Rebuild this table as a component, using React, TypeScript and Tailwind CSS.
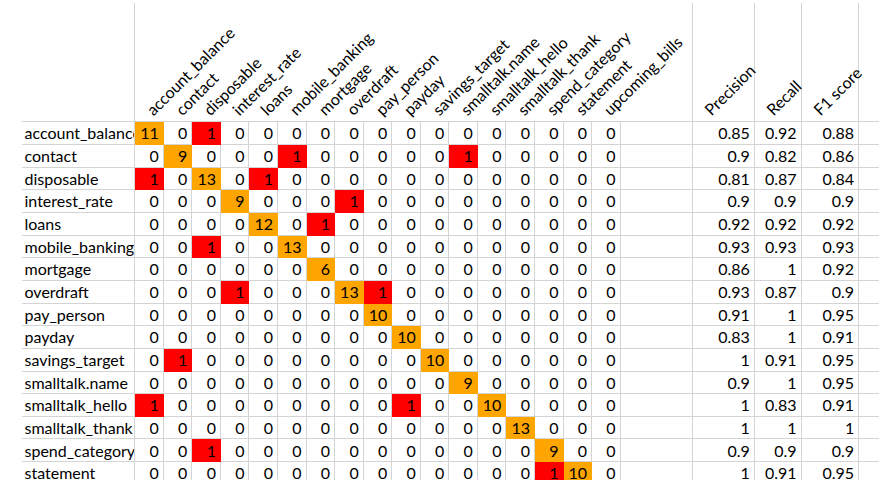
const GRID =
  "grid grid-cols-[22px_113.3px_repeat(17,28.55px)_72.6px_61.7px_46.7px_57.6px_1fr]";

const intents = [
  "account_balance",
  "contact",
  "disposable",
  "interest_rate",
  "loans",
  "mobile_banking",
  "mortgage",
  "overdraft",
  "pay_person",
  "payday",
  "savings_target",
  "smalltalk.name",
  "smalltalk_hello",
  "smalltalk_thank",
  "spend_category",
  "statement",
  "upcoming_bills",
];

type Row = { label: string; counts: number[]; p: string; r: string; f: string };

function counts(hits: Record<number, number>) {
  return intents.map((_, i) => hits[i] ?? 0);
}

const rows: Row[] = [
  { label: "account_balance", counts: counts({ 0: 11, 2: 1 }), p: "0.85", r: "0.92", f: "0.88" },
  { label: "contact", counts: counts({ 1: 9, 5: 1, 11: 1 }), p: "0.9", r: "0.82", f: "0.86" },
  { label: "disposable", counts: counts({ 0: 1, 2: 13, 4: 1 }), p: "0.81", r: "0.87", f: "0.84" },
  { label: "interest_rate", counts: counts({ 3: 9, 7: 1 }), p: "0.9", r: "0.9", f: "0.9" },
  { label: "loans", counts: counts({ 4: 12, 6: 1 }), p: "0.92", r: "0.92", f: "0.92" },
  { label: "mobile_banking", counts: counts({ 2: 1, 5: 13 }), p: "0.93", r: "0.93", f: "0.93" },
  { label: "mortgage", counts: counts({ 6: 6 }), p: "0.86", r: "1", f: "0.92" },
  { label: "overdraft", counts: counts({ 3: 1, 7: 13, 8: 1 }), p: "0.93", r: "0.87", f: "0.9" },
  { label: "pay_person", counts: counts({ 8: 10 }), p: "0.91", r: "1", f: "0.95" },
  { label: "payday", counts: counts({ 9: 10 }), p: "0.83", r: "1", f: "0.91" },
  { label: "savings_target", counts: counts({ 1: 1, 10: 10 }), p: "1", r: "0.91", f: "0.95" },
  { label: "smalltalk.name", counts: counts({ 11: 9 }), p: "0.9", r: "1", f: "0.95" },
  { label: "smalltalk_hello", counts: counts({ 0: 1, 9: 1, 12: 10 }), p: "1", r: "0.83", f: "0.91" },
  { label: "smalltalk_thank", counts: counts({ 13: 13 }), p: "1", r: "1", f: "1" },
  { label: "spend_category", counts: counts({ 2: 1, 14: 9 }), p: "0.9", r: "0.9", f: "0.9" },
  { label: "statement", counts: counts({ 14: 1, 15: 10 }), p: "1", r: "0.91", f: "0.95" },
];

// header text sits at 45deg, anchored at the bottom-left of its column
function Slanted({ text }: { text: string }) {
  return (
    <span className="absolute bottom-[3px] left-[20px] origin-bottom-left -rotate-45 whitespace-nowrap leading-none">
      {text}
    </span>
  );
}

function HeaderRow() {
  return (
    <div className={`${GRID} h-[119.3px]`}>
      <div />
      <div className="border-r border-b border-[#d4d4d4]" />
      {intents.map((name) => (
        <div key={name} className="relative border-b border-[#d4d4d4]">
          <Slanted text={name} />
        </div>
      ))}
      <div className="border-r border-b border-[#d4d4d4]" />
      <div className="relative border-r border-b border-[#d4d4d4]">
        <Slanted text="Precision" />
      </div>
      <div className="relative border-r border-b border-[#d4d4d4]">
        <Slanted text="Recall" />
      </div>
      <div className="relative border-r border-b border-[#d4d4d4]">
        <Slanted text="F1 score" />
      </div>
      <div className="border-b border-[#d4d4d4]" />
    </div>
  );
}

function Num({ children }: { children: React.ReactNode }) {
  return (
    <div className="flex items-end justify-end border-r border-b border-[#d4d4d4] pr-[4px] pb-[2.5px] leading-4">
      {children}
    </div>
  );
}

function MatrixRow({ row, index }: { row: Row; index: number }) {
  return (
    <div className={`${GRID} h-[22.67px]`}>
      <div />
      <div className="flex items-end overflow-hidden whitespace-nowrap border-r border-b border-[#d4d4d4] pl-[2.5px] pb-[2.5px] leading-4">
        {row.label}
      </div>
      {row.counts.map((n, i) => {
        const tone =
          n === 0
            ? "border-[#d4d4d4]"
            : i === index
              ? "bg-[#ffa500] border-[#ffa500]"
              : "bg-[#ff0000] border-[#ff0000]";
        return (
          <div
            key={i}
            className={`flex items-end justify-end border-r border-b pr-[4px] pb-[2.5px] leading-4 ${tone}`}
          >
            {n}
          </div>
        );
      })}
      <div className="border-r border-b border-[#d4d4d4]" />
      <Num>{row.p}</Num>
      <Num>{row.r}</Num>
      <Num>{row.f}</Num>
      <div className="border-b border-[#d4d4d4]" />
    </div>
  );
}

export default function App() {
  return (
    <div className="h-[480px] w-[879px] overflow-hidden bg-white font-['Lato',sans-serif] text-[16px] text-black">
      <div className="h-[3px]" />
      <HeaderRow />
      {rows.map((row, i) => (
        <MatrixRow key={row.label} row={row} index={i} />
      ))}
    </div>
  );
}
